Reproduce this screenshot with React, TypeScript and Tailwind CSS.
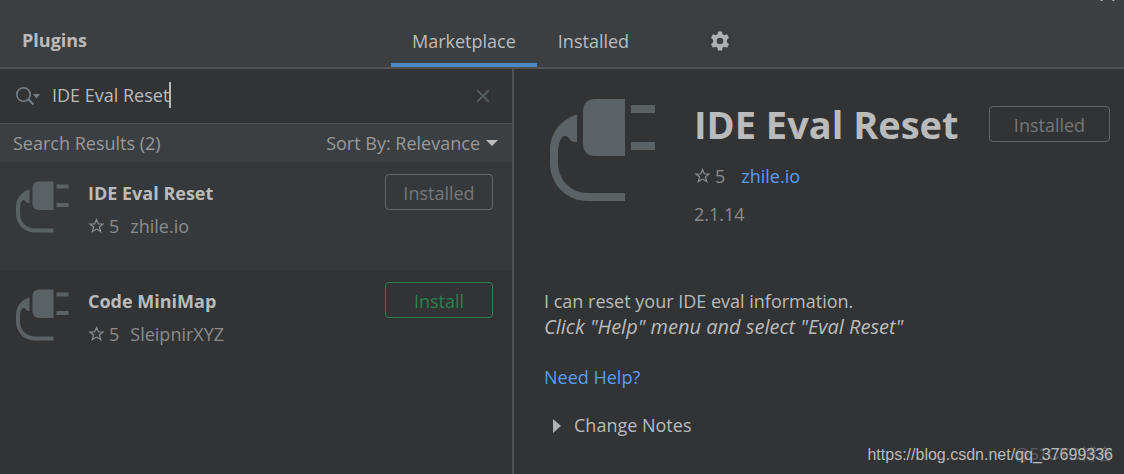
import {useState} from "react";

const plugins = [
    {name: "IDE Eval Reset", vendor: "zhile.io", rating: 5, installed: true},
    {name: "Code MiniMap", vendor: "SleipnirXYZ", rating: 5, installed: false},
];

function PlugIcon({className}: { className: string }) {
    return (
        <svg className={className} viewBox="0 0 106 102" fill="#5a6265" aria-hidden="true">
            <path d="M75 0H46Q33 0 33 13V44Q33 57 46 57H75Z"/>
            <rect x="81" y="6" width="24" height="8"/>
            <rect x="81" y="43" width="24" height="8"/>
            <path
                d="M27 16H25C10 22 0 34 0 52V64C0 86 17 102 38 102H75V94H38C21 94 8 81 8 64V55C8 44 11 37 15 37C20 37 19 43 25 43H27Z"/>
        </svg>
    );
}

function Rating({value}: { value: number }) {
    return (
        <span className="flex items-center gap-[5px]">
            <svg className="size-4" viewBox="0 0 16 16" fill="none" stroke="currentColor" strokeWidth="1.2"
                 aria-hidden="true">
                <path d="M8.5 1.6L10.4 6H15L11.4 9L12.7 13.6L8.5 11.1L4.3 13.6L5.6 9L2 6H6.6Z"/>
            </svg>
            {value}
        </span>
    );
}

function InstallButton({installed, className}: { installed: boolean; className: string }) {
    return (
        <button type="button" disabled={installed}
                className={`h-9 shrink-0 rounded border pt-px leading-6 ${installed ? "border-[#646666] text-[#777777]" : "border-[#2a8252] text-[#2a8252]"} ${className}`}>
            {installed ? "Installed" : "Install"}
        </button>
    );
}

function PluginRow({plugin, selected}: { plugin: typeof plugins[number]; selected: boolean }) {
    return (
        <li className={`flex h-[108px] items-start pr-[19px] pl-4 pt-3 ${selected ? "bg-[#36393b]" : ""}`}>
            <PlugIcon className="mt-[7px] h-[52px] w-[53px] shrink-0"/>
            <div className="ml-[19px] min-w-0 flex-1 pt-1">
                <h2 className="truncate leading-[30px] font-bold text-[#bbbbbb]">{plugin.name}</h2>
                <div className="mt-[3px] flex items-center gap-[11px] leading-[30px] text-[#8c8c8c]">
                    <Rating value={plugin.rating}/>
                    <span>{plugin.vendor}</span>
                </div>
            </div>
            <InstallButton installed={plugin.installed} className="w-[108px]"/>
        </li>
    );
}

export default function App() {
    const [query, setQuery] = useState("IDE Eval Reset");

    return (
        <div
            className="relative flex min-h-screen flex-col overflow-hidden bg-[#313335] font-['Open_Sans',sans-serif] text-[18px] text-[#bbbbbb]">
            <svg className="absolute top-[-12px] right-[9px] h-[13px] w-[15px]" viewBox="0 0 15 13" stroke="#bbbbbb"
                 strokeWidth="1.5" aria-hidden="true">
                <path d="M1 0L14 13M14 0L1 13"/>
            </svg>

            <header className="flex h-[69px] border-b-2 border-[#515151] bg-[#3c3f41]">
                <h1 className="w-[391px] shrink-0 pt-[25px] pl-[22px] leading-[30px] font-bold">Plugins</h1>
                <nav className="flex" role="tablist">
                    <button type="button" role="tab" aria-selected="true"
                            className="border-b-4 border-[#4a88c7] px-[21px] pt-5">
                        Marketplace
                    </button>
                    <button type="button" role="tab" aria-selected="false"
                            className="border-b-4 border-transparent px-[21px] pt-5">
                        Installed
                    </button>
                </nav>
                <button type="button" aria-label="Settings" className="ml-[60px] pt-[14px]">
                    <svg className="size-5" viewBox="0 0 20 20" fill="#afb1b3" fillRule="evenodd">
                        <path
                            d="M8 .5H12L12.5 3.3L14.3 4.3L17 3.3L19 6.8L16.8 8.8V11.2L19 13.2L17 16.7L14.3 15.7L12.5 16.7L12 19.5H8L7.5 16.7L5.7 15.7L3 16.7L1 13.2L3.2 11.2V8.8L1 6.8L3 3.3L5.7 4.3L7.5 3.3ZM10 6.7A3.3 3.3 0 1 0 10 13.3A3.3 3.3 0 1 0 10 6.7Z"/>
                    </svg>
                </button>
            </header>

            <div className="flex flex-1">
                <aside className="w-[514px] shrink-0 border-r-2 border-[#515151]">
                    <div className="flex h-[55px] items-center border-b border-[#515151] pr-[22px] pl-4">
                        <svg className="h-5 w-6 shrink-0" viewBox="0 0 24 20" fill="none" stroke="#75808a"
                             strokeWidth="1.6" aria-hidden="true">
                            <circle cx="7.5" cy="8.5" r="6.7"/>
                            <path d="M12 13L17.5 18.5" strokeWidth="2.2"/>
                            <path d="M17 8H24L20.5 12.5Z" fill="#75808a" stroke="none"/>
                        </svg>
                        <div className="ml-3 flex items-center pb-[2px]">
                            <input type="text" aria-label="Search plugins" value={query}
                                   onChange={e => setQuery(e.target.value)}
                                   className="field-sizing-content bg-transparent leading-[30px] outline-none"/>
                            <span className="h-[26px] w-[2px] bg-[#bbbbbb]"/>
                        </div>
                        <button type="button" aria-label="Clear search" className="ml-auto"
                                onClick={() => setQuery("")}>
                            <svg className="size-[14px]" viewBox="0 0 14 14" stroke="#5f6669" strokeWidth="1.5">
                                <path d="M1.5 1.5L12.5 12.5M12.5 1.5L1.5 12.5"/>
                            </svg>
                        </button>
                    </div>

                    <div
                        className="flex h-[38px] items-center justify-between bg-[#3c3f41] pr-[14px] pl-[13px] text-[#999999]">
                        <span>Search Results (2)</span>
                        <div className="flex items-center">
                            <label htmlFor="sort">Sort By:&nbsp;</label>
                            <select id="sort" className="field-sizing-content appearance-none bg-transparent">
                                <option>Relevance</option>
                            </select>
                            <svg className="ml-[6px] h-[6px] w-3" viewBox="0 0 12 6" fill="#bbbbbb" aria-hidden="true">
                                <path d="M0 0H12L6 6Z"/>
                            </svg>
                        </div>
                    </div>

                    <ul>
                        {plugins.map((p, i) => <PluginRow key={p.name} plugin={p} selected={i === 0}/>)}
                    </ul>
                </aside>

                <main className="min-w-0 flex-1 pt-[30px] pr-[14px] pl-[30px]">
                    <div className="flex items-start pl-[6px]">
                        <PlugIcon className="h-[102px] w-[106px] shrink-0"/>
                        <div className="ml-[38px] min-w-0 flex-1">
                            <div className="flex items-center justify-between">
                                <h2 className="text-[38px] leading-[50px] font-bold whitespace-nowrap">IDE Eval Reset</h2>
                                <InstallButton installed className="w-[121px]"/>
                            </div>
                            <div className="mt-3 flex items-center gap-4 leading-[30px] text-[#8c8c8c]">
                                <Rating value={5}/>
                                <a href="#" className="text-[#589df6]">zhile.io</a>
                            </div>
                            <p className="mt-2 leading-[30px] text-[#8c8c8c]">2.1.14</p>
                        </div>
                    </div>

                    <div className="mt-[60px] leading-[25px]">
                        <p>I can reset your IDE eval information.</p>
                        <p className="text-[20px] leading-[25px] italic">Click "Help" menu and select "Eval Reset"</p>
                        <a href="#" className="mt-[26px] block text-[#589df6]">Need Help?</a>
                        <button type="button" className="mt-[23px] ml-[9px] flex items-center gap-[13px]">
                            <svg className="h-[14px] w-2" viewBox="0 0 8 14" fill="#afb1b3" aria-hidden="true">
                                <path d="M0 0L8 7L0 14Z"/>
                            </svg>
                            Change Notes
                        </button>
                    </div>
                </main>
            </div>

            <div
                className="absolute right-[11px] bottom-[9px] font-['Liberation_Sans','Noto_Sans_CJK_SC',sans-serif] text-base leading-5 whitespace-nowrap">
                <span className="absolute right-0 text-[#5c5e60]">@51CTO博客</span>
                <span className="relative text-[#bbbbbb]">https://blog.csdn.net/qq_37699336</span>
            </div>
        </div>
    );
}
